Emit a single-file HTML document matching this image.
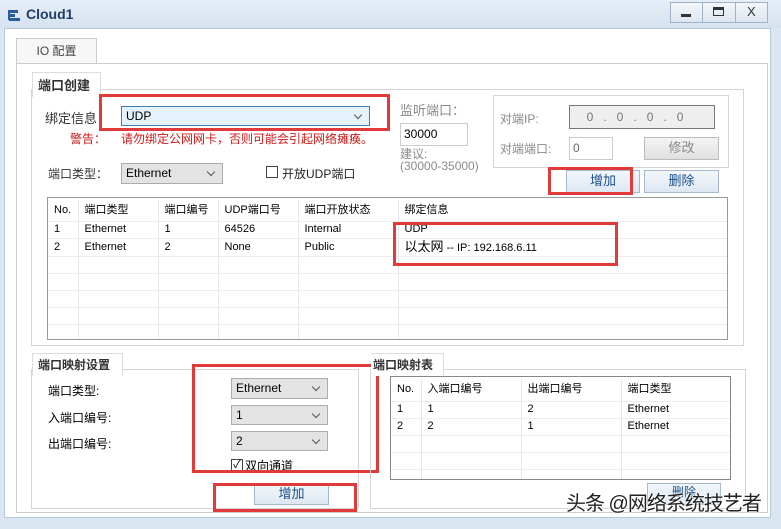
<!DOCTYPE html>
<html><head><meta charset="utf-8"><style>
*{margin:0;padding:0;box-sizing:border-box}
body{width:781px;height:529px;overflow:hidden;background:#dbe6f3;font-family:"Liberation Sans","Noto Sans CJK SC",sans-serif;font-size:12px;color:#000;position:relative}
.a{position:absolute;white-space:nowrap}
.box{position:absolute;border:1px solid #d5d5d5}
.combo{position:absolute;background:#e3e3e3;border:1px solid #acacac;padding-left:4px;line-height:18px;font-size:12px}
.combo:after{content:"";position:absolute;right:8px;top:5px;width:5px;height:5px;border-right:1px solid #555;border-bottom:1px solid #555;transform:rotate(45deg)}
.btn{position:absolute;border:1px solid #a8b8cc;background:linear-gradient(#f3f7fb,#dde7f2);text-align:center;color:#1d4f8a;line-height:20px;font-size:13px}
.red{position:absolute;border:3px solid #e03a3a}
.gray{color:#8a8a8a}
table{border-collapse:collapse;font-size:11px}
td{border-right:1px solid #e6e6e6;border-bottom:1px solid #ececec;height:17px;line-height:15px;padding-left:6px;vertical-align:middle}
.grp{position:absolute;font-weight:bold;color:#333;font-size:12px;background:#fff}
</style></head><body>
<div class="a" style="left:0;top:0;width:781px;height:28px;background:linear-gradient(#e6eef8,#d6e2f0)"></div>
<svg class="a" style="left:7px;top:7px" width="16" height="16"><rect x="1" y="3" width="10" height="3" fill="#2a5c9a"/><rect x="2" y="7" width="6" height="3" fill="#2a5c9a"/><rect x="2" y="11" width="11" height="3" fill="#2a5c9a"/><rect x="1" y="5" width="2" height="8" fill="#2a5c9a"/></svg>
<div class="a" style="left:26px;top:6px;font-size:14px;font-weight:bold;color:#1f3e66">Cloud1</div>
<div class="a" style="left:670px;top:2px;width:98px;height:21px;border:1px solid #9fb2c8;background:linear-gradient(#f4f7fb,#dce6f1)"></div>
<div class="a" style="left:702px;top:2px;width:1px;height:21px;background:#9fb2c8"></div>
<div class="a" style="left:735px;top:2px;width:1px;height:21px;background:#9fb2c8"></div>
<div class="a" style="left:681px;top:14px;width:10px;height:3px;background:#333"></div>
<div class="a" style="left:713px;top:7px;width:11px;height:9px;border:1px solid #333;border-top-width:3px"></div>
<div class="a" style="left:747px;top:4px;font-size:13px;color:#333">X</div>
<div class="a" style="left:4px;top:28px;width:767px;height:490px;background:#fff;border:1px solid #b9c8d9"></div>
<div class="a" style="left:16px;top:38px;width:81px;height:26px;border:1px solid #ccc;border-bottom:none;background:#f7f7f7;text-align:center;line-height:24px;color:#444">IO 配置</div>
<div class="a" style="left:16px;top:63px;width:752px;height:450px;border:1px solid #ccc"></div>
<div class="box" style="left:31px;top:89px;width:713px;height:257px"></div>
<div class="grp" style="left:32px;top:72px;padding:2px 10px 3px 5px;border:1px solid #ddd;border-bottom:none;font-size:13px">端口创建</div>
<div class="a" style="left:45px;top:108px;font-size:13px;color:#333">绑定信息：</div>
<div class="combo" style="left:121px;top:106px;width:249px;height:20px;background:#e5f1fb;border-color:#3c7fb1">UDP</div>
<div class="red" style="left:99px;top:94px;width:291px;height:37px"></div>
<div class="a" style="left:70px;top:130px;color:#d01818;font-size:12px">警告：</div>
<div class="a" style="left:121px;top:130px;color:#d01818;font-size:12px">请勿绑定公网网卡，否则可能会引起网络瘫痪。</div>
<div class="a" style="left:48px;top:165px;color:#333">端口类型：</div>
<div class="combo" style="left:121px;top:163px;width:102px;height:21px">Ethernet</div>
<div class="a" style="left:266px;top:166px;width:12px;height:12px;border:1px solid #444;background:#fff"></div>
<div class="a" style="left:282px;top:165px;color:#222">开放UDP端口</div>
<div class="a gray" style="left:400px;top:103px;font-size:13px;line-height:15px">监听端口：</div>
<div class="a" style="left:400px;top:123px;width:68px;height:23px;border:1px solid #ccc;padding-left:3px;line-height:21px">30000</div>
<div class="a gray" style="left:400px;top:148px;line-height:13px">建议:</div>
<div class="a gray" style="left:400px;top:160px;line-height:13px">(30000-35000)</div>
<div class="box" style="left:493px;top:95px;width:236px;height:73px"></div>
<div class="a gray" style="left:500px;top:110px">对端IP:</div>
<div class="a" style="left:569px;top:105px;width:146px;height:24px;border:1px solid #777;background:#eee;color:#777;line-height:22px">&nbsp;&nbsp;&nbsp;&nbsp;&nbsp;0&nbsp;&nbsp;&nbsp;.&nbsp;&nbsp;&nbsp;0&nbsp;&nbsp;&nbsp;.&nbsp;&nbsp;&nbsp;0&nbsp;&nbsp;&nbsp;.&nbsp;&nbsp;&nbsp;0</div>
<div class="a gray" style="left:500px;top:140px">对端端口:</div>
<div class="a" style="left:569px;top:137px;width:44px;height:23px;border:1px solid #ccc;padding-left:3px;line-height:21px;color:#666">0</div>
<div class="btn" style="left:644px;top:137px;width:75px;height:23px;color:#888;background:linear-gradient(#f4f4f4,#e0e0e0);border-color:#bbb">修改</div>
<div class="btn" style="left:566px;top:170px;width:74px;height:23px">增加</div>
<div class="btn" style="left:644px;top:170px;width:75px;height:23px">删除</div>
<div class="red" style="left:548px;top:167px;width:85px;height:28px"></div>
<div class="a" style="left:47px;top:197px;width:681px;height:143px;border:1px solid #999;overflow:hidden">
<table style="width:681px;margin-top:2px">
<tr style="height:21px"><td style="width:30px">No.</td><td style="width:80px">端口类型</td><td style="width:60px">端口编号</td><td style="width:80px">UDP端口号</td><td style="width:100px">端口开放状态</td><td>绑定信息</td></tr>
<tr><td>1</td><td>Ethernet</td><td>1</td><td>64526</td><td>Internal</td><td>UDP</td></tr>
<tr><td>2</td><td>Ethernet</td><td>2</td><td>None</td><td>Public</td><td><span style="font-size:13px">以太网</span> -- IP: 192.168.6.11</td></tr>
<tr><td></td><td></td><td></td><td></td><td></td><td></td></tr>
<tr><td></td><td></td><td></td><td></td><td></td><td></td></tr>
<tr><td></td><td></td><td></td><td></td><td></td><td></td></tr>
<tr><td></td><td></td><td></td><td></td><td></td><td></td></tr>
<tr><td></td><td></td><td></td><td></td><td></td><td></td></tr>
</table></div>
<div class="red" style="left:393px;top:222px;width:225px;height:44px"></div>
<div class="box" style="left:31px;top:369px;width:328px;height:140px"></div>
<div class="grp" style="left:32px;top:353px;padding:2px 12px 3px 5px;border:1px solid #ddd;border-bottom:none">端口映射设置</div>
<div class="a" style="left:48px;top:382px">端口类型:</div>
<div class="a" style="left:48px;top:409px">入端口编号:</div>
<div class="a" style="left:48px;top:435px">出端口编号:</div>
<div class="combo" style="left:231px;top:378px;width:97px;height:21px">Ethernet</div>
<div class="combo" style="left:231px;top:405px;width:97px;height:20px">1</div>
<div class="combo" style="left:231px;top:431px;width:97px;height:20px">2</div>
<div class="a" style="left:231px;top:459px;width:12px;height:12px;border:1px solid #444;font-size:11px;line-height:10px;text-align:center">✓</div>
<div class="a" style="left:245px;top:457px">双向通道</div>
<div class="red" style="left:192px;top:364px;width:187px;height:109px"></div>
<div class="btn" style="left:254px;top:483px;width:75px;height:22px">增加</div>
<div class="red" style="left:213px;top:483px;width:144px;height:29px"></div>
<div class="box" style="left:370px;top:369px;width:376px;height:140px"></div>
<div class="grp" style="left:371px;top:353px;padding:2px 10px 3px 2px;border:1px solid #ddd;border-left:none;border-bottom:none">端口映射表</div>
<div class="a" style="left:390px;top:376px;width:341px;height:104px;border:1px solid #888;overflow:hidden">
<table style="width:341px;margin-top:2px">
<tr style="height:22px"><td style="width:30px">No.</td><td style="width:100px">入端口编号</td><td style="width:100px">出端口编号</td><td>端口类型</td></tr>
<tr><td>1</td><td>1</td><td>2</td><td>Ethernet</td></tr>
<tr><td>2</td><td>2</td><td>1</td><td>Ethernet</td></tr>
<tr><td></td><td></td><td></td><td></td></tr>
<tr><td></td><td></td><td></td><td></td></tr>
<tr><td></td><td></td><td></td><td></td></tr>
</table></div>
<div class="btn" style="left:647px;top:483px;width:74px;height:22px;line-height:16px;font-size:12px">删除</div>
<div class="a" style="left:566px;top:492px;font-size:20px;line-height:24px;color:#222;letter-spacing:-1px;text-shadow:0 0 2px #fff,0 0 2px #fff">头条 @网络系统技艺者</div>
</body></html>
